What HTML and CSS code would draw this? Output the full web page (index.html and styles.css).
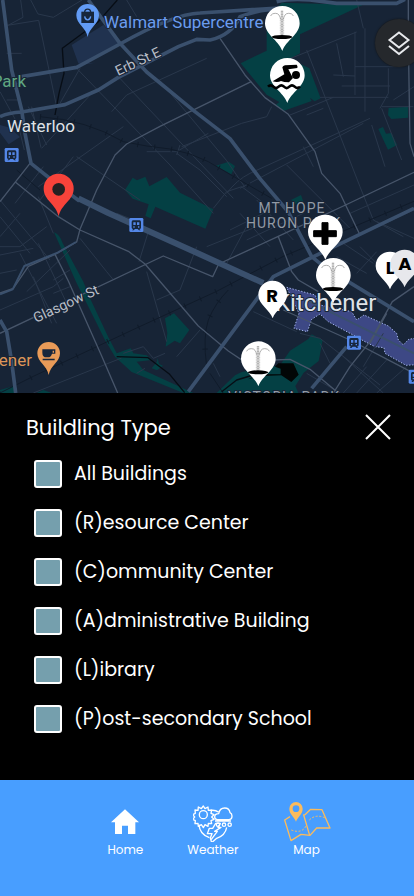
FILE: index.html
```html
<!DOCTYPE html>
<html lang="en">
<head>
    <meta charset="UTF-8">
    <meta name="viewport" content="width=device-width, initial-scale=1.0">
    <title>Map - Building Type</title>
    <link rel="stylesheet" href="styles.css">
</head>
<body>
    <!-- Map -->
    <main class="map">
        <svg class="map-canvas" viewBox="0 0 414 393" preserveAspectRatio="xMinYMin slice" role="img" aria-label="Map of Kitchener and Waterloo">
            <defs>
                <g id="pin"><path d="M0 83C-12 50-52 34-52 0a52 52 0 0 1 104 0C52 34 12 50 0 83z"/></g>
                <g id="small-pin"><path d="M0 70C-8 44-43 29-43 0a43 43 0 0 1 86 0C43 29 8 44 0 70z"/></g>
                <g id="place-pin"><path d="M0 65C-5 37-34 26-34 0a34 34 0 0 1 68 0C34 26 5 37 0 65z"/></g>
                <g id="fountain">
                    <use href="#pin" fill="#fff"/>
                    <g fill="none" stroke="#777" stroke-width="2">
                        <path d="M-3-38V35M1-38V35" stroke-dasharray="4 1"/>
                        <path d="M-6-15V35M4-15V35" stroke="#aaa" stroke-dasharray="3 2"/>
                        <path d="M-35-22c2-6 8-8 15-8 9 0 13 8 15 18M33-22c-2-6-8-8-15-8-9 0-13 8-15 18" stroke="#888"/>
                    </g>
                    <ellipse cx="-1" cy="41" rx="31" ry="6"/>
                </g>
                <g id="station">
                    <rect x="-21" y="-21" width="42" height="42" rx="4" fill="#5487e8"/>
                    <path d="M-10-14h20q4 0 4 5V8q0 4-5 4l4 4h-5l-4-4h-8l-4 4h-5l4-4q-5 0-5-4V-9q0-5 4-5z" fill="#17263c"/>
                    <path d="M-9-8H-2V0H-9zM2-8H9V0H2zM-9 4h4v4h-4zM5 4h4v4H5z" fill="#5487e8"/>
                </g>
            </defs>

            <!-- map artwork is drawn at three units to the pixel -->
            <g transform="scale(.33333)">
                <g class="park">
                    <path d="M845 8L1088 15 900 103V160L870 176 928 205 962 295 944 304 930 293 935 303 850 333 828 314 838 306 800 284 722 190 800 152V60z"/>
                    <path d="M375 570L398 533 411 541 436 530 448 559 500 531 540 578 640 628 616 686 466 620 452 655 436 648 446 613 398 596z"/>
                    <path d="M648 497L686 485 705 498 694 523zM873 600L903 585 910 605 890 615zM1166 324l58-4v33l-50 4-10-12zM1135 387l14-6 9 20 17-2 16 36-27 14z"/>
                    <path d="M162 697Q180 704 188 730L250 845 270 895 325 1012 350 1060 392 1045 400 1060 440 1066 455 1080 410 1085 430 1110 580 1179H550L395 1116 345 1070 315 1020 230 850z"/>
                    <path d="M495 955L522 940 568 990 540 1030 524 1022 497 1040 502 1000zM455 1105l15-18 3-12 4 17 12 5-18 14z"/>
                    <path d="M650 1179l55-53 20-10 115-20 30-44 55-35 10-14 33 18-12 62-45 35-25 40 15 35zM0 1170l42-12v21H0zM110 1179l20-9 25 9z"/>
                </g>
                <path d="M215 135L310 75 362 130 255 190 287 188 245 194 235 190zM0 375l30 8 30 28-34 22-26-35z" fill="#20324f"/>
                <path d="M860 862L945 885 960 915 1055 935 1070 960 1092 945 1165 978 1190 1000 1195 1020 1210 1035 1226 1018 1250 1014V1094L1218 1096 1155 1060 1152 1043 1125 1040 1095 1025 1050 1000 985 965 960 942 935 958 922 995 882 985 897 940z" fill="#3d4885" stroke="#a6b7ee" stroke-width="3" stroke-dasharray="4 5"/>

                <g class="street">
                    <path d="M62 0l7 52-45 24M92 0l22 42 46 10 86-52M22 76l94-15 52 250M20 160h45M26 250h44M20 300h40M0 275l55 100 18 75M95 320l28 123M85 320l55 115M240 205l-60 105M230 205l280 290 130 145M355 230l345 365M480 242l200 240 55 80M125 445l150-165M115 560l255-180M220 470L120 600M230 470l190 130M335 335l45-50 240-110M350 640l75 30M440 455h90l95-55M530 460l70 50 80 80M530 465l10-30M380 0l30 50"/>
                    <path d="M545 440l180-70 75-20 15-30M680 575l45-15 60 45M680 575l-40 50M720 565l370-195M680 580q30-40 70-60l360-165M870 345l50-20 80-33M860 495l190 190M910 440l30 60M920 150l160 410 40 100 90 50M1010 130l20 100M1070 0l20 85M870 176l200-80M1065 95v190M1095 85v250M1000 225l65 3M1025 258h145M960 292h205M1065 200h140M1165 205v75l-25 45M920 345l50-20M1145 325l60 155M1115 375l40 125M1145 320h95M1180 300l62-40M1050 640l192-85M1080 705l162-75"/>
                    <path d="M0 650l90 110M0 600l150 180M60 640l-60 70M130 500l-85 110M115 590l45 110M0 740h60l80-60M0 765l100-20M60 760l110 210M115 730l90 190M0 820l50-10M0 930l160-70 30-25M80 875l130-125M160 840l50-30M160 880l50-20M100 830l55 140M240 715l80 100 18 22M445 695l-28 90M440 815l60 210M470 900l70-30 50-130M495 1060l-35 15-30-35-60 20M410 1120l25-15M100 1179l265-105M530 1070l70-80"/>
                    <path d="M720 640l90 100M770 600l110 120M690 690l120-60M740 720l170-80M680 790l70-130M620 740l150-60M1010 770l90 50M1030 730l90 60M1130 665l112 50M1080 740l90 90M1070 820l60-65M760 935l130 60M900 1000l60 15 180 140M960 1030l30 60M1030 1070l120 109M1100 1100l-70 79M1160 1080l-90 99M1220 1100l-90 79M1150 1000l-60 100M920 1120l100 59M640 1090l20 40"/>
                </g>

                <g class="rail">
                    <path d="M120 350q140 10 250 75 70 15 140 22 60 10 115 38 110 65 190 110M0 1179l100-50 310-145 240-110 200-105 392-165M50 510l70 60M620 1100q-12-90 5-140 20-50 60-90M630 1120l40 60"/>
                    <path class="ties" d="M120 350q140 10 250 75 70 15 140 22 60 10 115 38 110 65 190 110M0 1179l100-50 310-145 240-110 200-105 392-165M620 1100q-12-90 5-140 20-50 60-90"/>
                </g>
                <path d="M352 0l-57 65-108 80 5 75-15 60-12 65M350 1070l94 3 65 50 45 55M665 1175l45-35 50-15" class="track"/>
                <path d="M825 1100l10-10h45l16 34-22 22-30-20-60 2-40 10 30-15h68v-17z" fill="#020606"/>

                <g class="lane">
                    <path d="M0 605L90 490M45 545l130 105 65 40 145 64 50 38 160 186 90 75 60 40M290 570l55-105 35-33 100-53 275-135M290 570l-50 118-10 38-65 37-80 36-45 66-40 14M165 763l40 80 100 225 48 111M0 1000l490-232 148 62 18-38 177-82 210-98 199-95M660 115l75 110 60 68 70 50 80 112 20 65 55 60 60 125M835 710l40 105 20 25 60 35M850 930l200 90 192 100M820 1080l50-2 60 30 85 71M1242 860l-65 45-67 120-60 75-50 79M1110 1030l50-90M1225 0v120l5 310 12 40"/>
                </g>
                <g class="road">
                    <path d="M8 0l27 210 30 120 10 70 18 90 85 68 60 45M0 350q25-12 65-14l130-22 100-44 60-38 180-92 55-22 40 2q65-15 90-70 65-25 140-24M65 230l165-28 130-70q160-90 240-93l235-15M265 0l95 130 80 86 140 115 110 85 90 120 85 100 70 134 25 20 60 40 222 135M565 1175l255-345 110-55 312-150M0 960l20 35 15 90 12 94M935 1165l105-125" class="medium"/>
                    <path d="M235 595l90 44 255 115 210 95" class="wide"/>
                    <path d="M830 5q40-10 100-5l80 10h180l25-12" class="medium"/>
                    <path d="M0 883l38-15 35-70 100-40 55-32M1242 1060L1000 940l-80-40" class="narrow"/>
                </g>
            </g>

            <g class="labels">
                <text x="104" y="28" class="label blue">Walmart Supercentre</text>
                <text transform="translate(118 76) rotate(-25)" class="street-name">Erb St E</text>
                <text x="26" y="87" class="label green" text-anchor="end">Park</text>
                <text x="7" y="132" class="label">Waterloo</text>
                <text transform="translate(36 323) rotate(-25)" class="street-name">Glasgow St</text>
                <text x="32" y="366" class="label orange" text-anchor="end">Kitchener</text>
                <text x="292" y="213" class="area" text-anchor="middle">MT HOPE</text>
                <text x="246" y="228" class="area">HURON PARK</text>
                <text x="275" y="311" class="city">Kitchener</text>
                <text x="284" y="402" class="area" text-anchor="middle">VICTORIA PARK</text>
            </g>

            <g transform="scale(.33333)">
                <use href="#station" x="35" y="465"/>
                <use href="#station" x="409" y="675"/>
                <use href="#station" x="1062" y="1028"/>
                <use href="#station" x="1247" y="1130"/>

                <g transform="translate(263 46)">
                    <use href="#place-pin" fill="#629bf5"/>
                    <path d="M-19-11h38v34h-38z" fill="#17263c"/>
                    <path d="M-9-9c0-13 18-13 18 0" fill="none" stroke="#17263c" stroke-width="4"/>
                    <path d="M-9 3c2 14 16 14 18 0" fill="none" stroke="#629bf5" stroke-width="4"/>
                </g>
                <g transform="translate(146 1060)">
                    <use href="#place-pin" fill="#e99b58"/>
                    <path d="M-19-12h39v13h-10q-3 11-12 11h-4q-13 0-13-14zm31 4v6h4v-6zM-18 16h36v5h-36z" fill="#17263c"/>
                </g>
                <g transform="translate(176 566)">
                    <path d="M0 83C-7 46-45 35-45 0a45 45 0 0 1 90 0C45 35 7 46 0 83z" fill="#f8433a"/>
                    <circle cy="2" r="19" fill="#242123"/>
                </g>

                <use href="#fountain" x="847" y="70"/>
                <use href="#fountain" x="1000" y="826"/>
                <use href="#fountain" x="775" y="1076"/>
                <g transform="translate(862 226)">
                    <use href="#pin" fill="#fff"/>
                    <circle cx="26" cy="-1" r="12"/>
                    <path d="M-15-24q2-5 8-6l35-2q4 4 2 10L3-18 17 8 5 21q-16 0-24-4-10 5-25 1L-9-3z"/>
                    <path d="M-58 34q8-8 16 0t16 0 16 0 16 0 16 0 16 0" fill="none" stroke="#000" stroke-width="8"/>
                </g>
                <g transform="translate(976 696)">
                    <use href="#pin" fill="#fff"/>
                    <path d="M-10-28H8V-4H33V14H8V37H-10V14H-35V-4H-10z" stroke="#000" stroke-width="3" stroke-linejoin="round"/>
                </g>
                <use href="#small-pin" x="818" y="885" fill="#fff"/>
                <use href="#small-pin" x="1170" y="798" fill="#fff"/>
                <use href="#small-pin" x="1214" y="792" fill="#e7e8ec"/>
            </g>
            <g class="pin-letters" text-anchor="middle">
                <text x="272" y="302">R</text>
                <text x="390" y="274">L</text>
                <text x="405" y="270">A</text>
            </g>
        </svg>
        <button type="button" class="layers-button" aria-label="Map layers">
            <svg width="24" height="26" viewBox="0 0 24 26"><path d="M12 2.500L21.500 10 12 17.500 2.500 10zM2 16l10 8 10-8"/></svg>
        </button>
    </main>

    <!-- Building filter -->
    <form class="filter">
        <div class="filter-header">
            <h2>Buildling Type</h2>
            <button type="button" class="close-button" aria-label="Close">
                <svg width="26" height="26" viewBox="0 0 26 26"><path d="M1 1l24 24M25 1L1 25"/></svg>
            </button>
        </div>
        <div class="options">
            <label><input type="checkbox" name="all">All Buildings</label>
            <label><input type="checkbox" name="resource">(R)esource Center</label>
            <label><input type="checkbox" name="community">(C)ommunity Center</label>
            <label><input type="checkbox" name="administrative">(A)dministrative Building</label>
            <label><input type="checkbox" name="library">(L)ibrary</label>
            <label><input type="checkbox" name="school">(P)ost-secondary School</label>
        </div>
    </form>

    <!-- Bottom navigation -->
    <nav class="navbar">
        <a href="#home">
            <svg width="28" height="40" viewBox="0 0 84 120" fill="#fff"><path d="M42 22L84 61H73V96H51V71H33V96H12V61H0z"/></svg>
            Home
        </a>
        <a href="#weather">
            <svg width="40" height="40" viewBox="0 0 120 120" fill="none" stroke="#fff" stroke-width="4" stroke-linejoin="round">
                <path d="M31 12l5 8 9-5 1 10 10-1-2 10 9 4-7 7 7 7-9 4 2 9-10-1-1 9-9-5-5 9-6-9-9 5-1-9-9 1 1-9-8-4 6-7-6-7 8-4-1-10 9 1 1-10 9 5z"/>
                <circle cx="31" cy="38" r="12"/>
                <path d="M56 25q12-1 20 5M73 53q-8-1-8-8 0-10 12-10 3-17 18-17 14 0 16 14 6 3 6 10 0 11-10 11zM66 57h48M18 68q2 29 31 39M101 76q-4 24-30 33l-15 13-4-14 5-13H43l6-16h10l9-15h14l-7 12h9L65 88h8L55 112"/>
                <circle cx="75" cy="68" r="5"/><circle cx="93" cy="68" r="5"/><circle cx="110" cy="68" r="5"/>
            </svg>
            Weather
        </a>
        <a href="#map" aria-current="page">
            <svg width="48" height="40" viewBox="0 0 144 120" fill="none" stroke="#fbbb5c" stroke-width="4" stroke-linejoin="round">
                <path d="M21 44L5 54l19 62 30-19 27 3 20-22 40 0-24-55-34-1-17 16-4 1 18 61"/>
                <path d="M25 84q31 12 44-12M79 54q20-20 50-5" stroke-width="3" stroke-dasharray="6 5"/>
                <path d="M39 59C34 45 19 36 19 20a20 20 0 0 1 40 0c0 16-15 25-20 39z" fill="#fbbb5c" stroke="none"/>
                <circle cx="39" cy="20" r="10" fill="#489eff" stroke="none"/>
            </svg>
            Map
        </a>
    </nav>
</body>
</html>
```

FILE: styles.css
```css
* { margin: 0; padding: 0; box-sizing: border-box; }
body { display: flex; flex-direction: column; min-height: 100vh; background-color: #000; color: #fff; font-family: Poppins, Inter, sans-serif; }

/* Map */
.map { position: relative; flex: 1; min-height: 240px; overflow: hidden; background-color: #172436; }
.map-canvas { position: absolute; width: 100%; height: 100%; display: block; }
.park { fill: #044044; }
.street, .rail, .lane, .road, .track { fill: none; stroke-linejoin: round; }
.street { stroke: #29374b; stroke-width: 3; }
.rail { stroke: #101b2a; stroke-width: 3; }
.ties { stroke-width: 16; stroke-dasharray: 3 48; }
.track { stroke: #070d15; stroke-width: 4; fill: none; }
.lane { stroke: #47556a; stroke-width: 4; }
.road { stroke: #3a506d; }
.medium { stroke-width: 11; }
.wide { stroke-width: 18; }
.narrow { stroke-width: 6; }

.labels { font-family: Roboto, sans-serif; fill: #dfe2e7; stroke: #172436; stroke-width: 2px; paint-order: stroke; stroke-linejoin: round; }
.label { font-size: 17px; }
.blue { fill: #6b9cef; }
.green { fill: #60a781; }
.orange { fill: #dc9558; }
.street-name { font-size: 14px; fill: #b9bec7; }
.area { font-size: 14px; letter-spacing: 1px; fill: #929aa5; }
.city { font-size: 24px; }
.pin-letters { font-size: 18px; font-weight: 700; }

.layers-button { position: absolute; top: 19px; right: -9px; width: 48px; height: 48px; display: flex; justify-content: center; align-items: center; background-color: #25282c; border: none; border-radius: 50%; box-shadow: 0 0 2px #111; cursor: pointer; }
.layers-button svg { fill: none; stroke: #e8eaed; stroke-width: 2; }

/* Building filter */
.filter { padding: 16px 23px 47px 26px; background-color: #000; }
.filter-header { display: flex; justify-content: space-between; align-items: center; height: 36px; margin-bottom: 14px; }
.filter-header h2 { font-size: 21px; font-weight: 400; }
.close-button { width: 26px; height: 26px; background: none; border: none; cursor: pointer; }
.close-button svg { display: block; fill: none; stroke: #fff; stroke-width: 2; }
.options { display: flex; flex-direction: column; gap: 20px; padding-left: 8px; }
.options label { display: flex; align-items: center; gap: 12px; height: 29px; font-size: 19px; cursor: pointer; }
.options input { appearance: none; width: 28px; height: 28px; background-color: #759fad; border: 2px solid #fff; border-radius: 3px; cursor: pointer; }
.options input:checked { background-color: #489eff; }

/* Bottom navigation */
.navbar { display: flex; justify-content: center; align-items: flex-start; gap: 44px; height: 116px; padding: 22px 0 0 24px; background-color: #489eff; }
.navbar a { display: flex; flex-direction: column; align-items: center; font-size: 12px; line-height: 16px; color: #fff; text-decoration: none; }
```
